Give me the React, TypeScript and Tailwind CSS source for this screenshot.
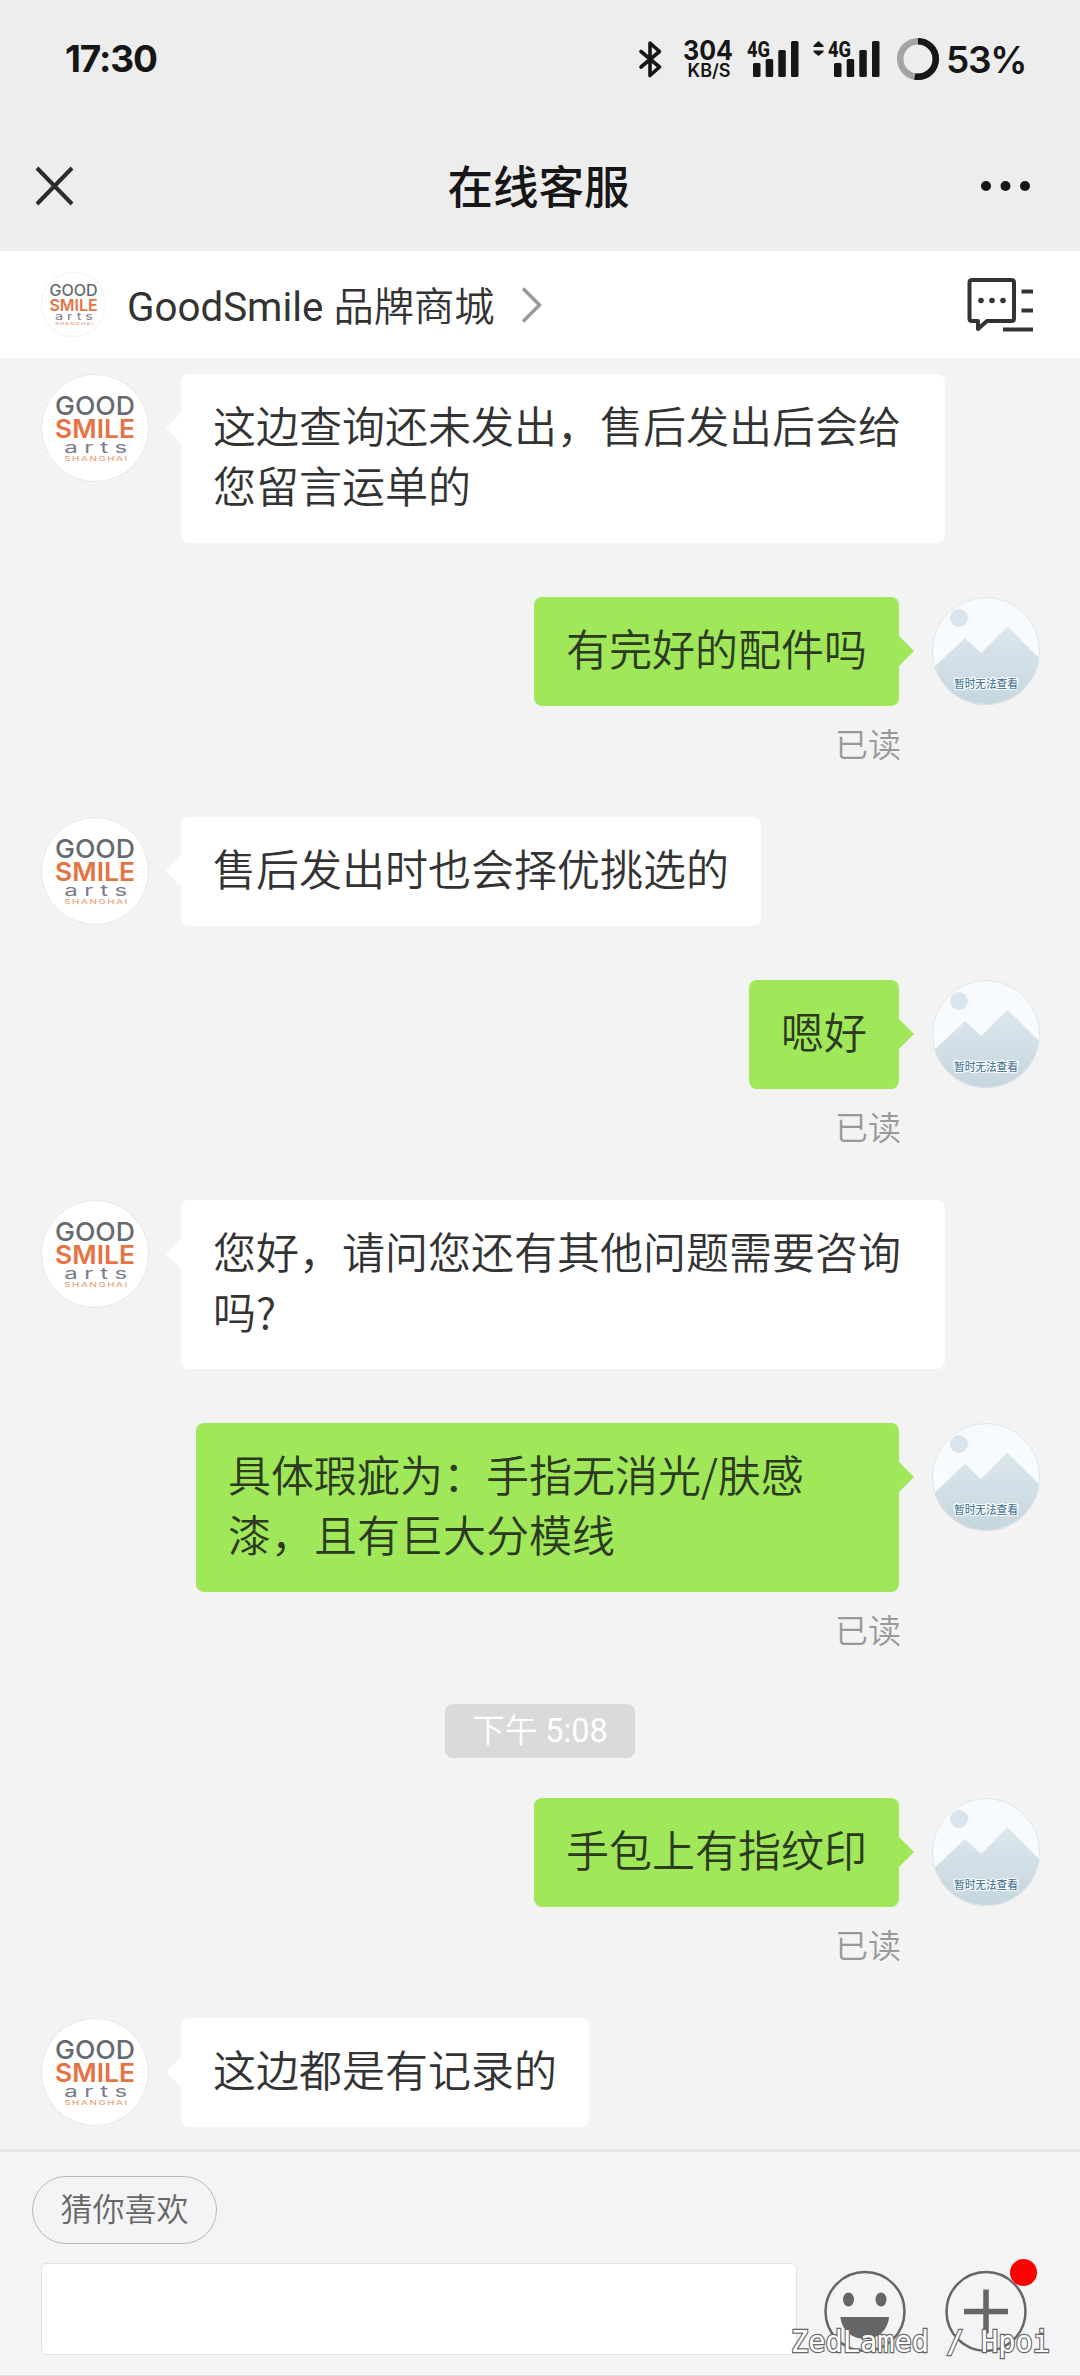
type Message = {
  id: number
  from: 'shop' | 'me'
  text: string
  wide?: boolean
}

const beforeBreak: Message[] = [
  { id: 1, from: 'shop', text: '这边查询还未发出，售后发出后会给您留言运单的', wide: true },
  { id: 2, from: 'me', text: '有完好的配件吗' },
  { id: 3, from: 'shop', text: '售后发出时也会择优挑选的' },
  { id: 4, from: 'me', text: '嗯好' },
  { id: 5, from: 'shop', text: '您好，请问您还有其他问题需要咨询吗?', wide: true },
  { id: 6, from: 'me', text: '具体瑕疵为：手指无消光/肤感漆，且有巨大分模线', wide: true },
]

const afterBreak: Message[] = [
  { id: 7, from: 'me', text: '手包上有指纹印' },
  { id: 8, from: 'shop', text: '这边都是有记录的' },
]

function ShopLogo({ size }: { size: number }) {
  return (
    <svg width={size} height={size} viewBox="0 0 108 108" className="shrink-0 font-[Inter]">
      <circle cx="54" cy="54" r="53.5" fill="#fff" stroke="#e8e8e8" strokeWidth="1" />
      <text x="14" y="40.5" fontSize="26" fontWeight="500" textLength="80" lengthAdjust="spacingAndGlyphs" fill="#666a6e">GOOD</text>
      <text x="14" y="64" fontSize="26" fontWeight="600" textLength="80" lengthAdjust="spacingAndGlyphs" fill="#e57343">SMILE</text>
      <text x="15.5" y="79.5" fontSize="16" textLength="42" transform="scale(1.5 1)" fill="#777b8c">arts</text>
      <text x="15.5" y="87.5" fontSize="6.5" fontWeight="500" textLength="42" transform="scale(1.5 1)" fill="#e9a27f">SHANGHAI</text>
    </svg>
  )
}

function UserAvatar() {
  return (
    <svg width="108" height="108" viewBox="0 0 108 108" className="shrink-0">
      <defs>
        <linearGradient id="sky" x1="0" y1="0" x2="0" y2="1">
          <stop offset="0" stopColor="#f6fafd" />
          <stop offset="1" stopColor="#fbfdfe" />
        </linearGradient>
        <linearGradient id="hill" x1="0" y1="0" x2="0" y2="1">
          <stop offset="0" stopColor="#dde7ed" />
          <stop offset="1" stopColor="#c5d6df" />
        </linearGradient>
        <clipPath id="round"><circle cx="54" cy="54" r="54" /></clipPath>
      </defs>
      <g clipPath="url(#round)">
        <rect width="108" height="108" fill="url(#sky)" />
        <circle cx="27" cy="21" r="9" fill="#dae4ec" />
        <path d="M0 72 L33 41 L49 56 L75.5 29.5 L108 62 V108 H0 Z" fill="url(#hill)" />
      </g>
      <circle cx="54" cy="54" r="53.5" fill="none" stroke="#dfe4e7" strokeWidth="1" />
      <text x="22" y="91" fontSize="10.8" fontWeight="500" textLength="64" fill="#4f7d9c" stroke="#fff" strokeWidth="2" paintOrder="stroke" className="font-['Noto_Sans_CJK_SC',sans-serif]">暂时无法查看</text>
    </svg>
  )
}

function Signal({ active }: { active?: boolean }) {
  return (
    <svg width="68" height="48" viewBox="0 0 68 48" fill="#161616" className="overflow-visible font-[Roboto]">
      {active && <path d="M5.5 5 L10.5 9.5 V11 H0.5 V9.5 Z M0.5 14.5 H10.5 V16 L5.5 20 L0.5 16 Z" />}
      <text x="15" y="20.5" fontSize="22" fontWeight="800" textLength="23" lengthAdjust="spacingAndGlyphs">4G</text>
      <rect x="21" y="27" width="7.5" height="14" rx="1.5" />
      <rect x="33.7" y="23" width="7.5" height="18" rx="1.5" />
      <rect x="46.3" y="14" width="7.5" height="27" rx="1.5" />
      <rect x="59" y="5" width="7.5" height="36" rx="1.5" />
    </svg>
  )
}

function StatusBar() {
  return (
    <div className="flex h-[120px] items-center pr-[55px] pl-[65px] text-[#161616]">
      <span className="mb-[2px] font-[Inter] text-[37px] font-bold tracking-[-1.1px]">17:30</span>
      <div className="ml-auto flex items-center">
        <svg width="26" height="48" viewBox="0 0 26 48" fill="none" stroke="#161616" strokeWidth="3.6" strokeLinejoin="round" strokeLinecap="round">
          <path d="M3 15.5 L21.5 31 L12 39.5 V7 L21.5 15.5 L3 31" />
        </svg>
        <svg width="54" height="48" viewBox="0 0 54 48" fill="#161616" className="ml-[18px] overflow-visible font-[Inter]">
          <text x="1" y="24" fontSize="27" fontWeight="700" textLength="50" lengthAdjust="spacingAndGlyphs">304</text>
          <text x="5.5" y="40.5" fontSize="18" fontWeight="600" textLength="43" lengthAdjust="spacingAndGlyphs">KB/S</text>
        </svg>
        <div className="-ml-[4px]"><Signal /></div>
        <div className="ml-[13px]"><Signal active /></div>
        <svg width="44" height="48" viewBox="0 0 44 48" fill="none" strokeWidth="6.5" className="ml-[15px]">
          <circle cx="22" cy="23" r="17.8" stroke="#a3a3a3" />
          <circle cx="22" cy="23" r="17.8" stroke="#161616" pathLength="100" strokeDasharray="53 47" transform="rotate(-90 22 23)" />
        </svg>
        <span className="ml-[6px] w-[79px] font-[Inter] text-[37px] font-semibold tracking-[-1.3px]">53%</span>
      </div>
    </div>
  )
}

function Bubble({ message }: { message: Message }) {
  const mine = message.from === 'me'
  const width = message.wide ? (mine ? 'w-[703px]' : 'w-[764px]') : ''

  return (
    <div className={`relative rounded-lg px-8 pt-5 pb-[29px] font-['Noto_Sans_CJK_SC',sans-serif] text-[43px] leading-[60px] font-[350] ${mine ? 'bg-[#a0e75a] text-[#2c3a1f]' : 'bg-white text-[#333]'} ${width}`}>
      {message.text}
      {mine ? (
        <svg width="16" height="32" viewBox="0 0 16 32" className="absolute top-[38px] -right-[15px]">
          <path d="M0 0 L16 16 L0 32 Z" fill="#a0e75a" />
        </svg>
      ) : (
        <svg width="16" height="32" viewBox="0 0 16 32" className="absolute top-[38px] -left-[15px]">
          <path d="M16 0 L0 16 L16 32 Z" fill="#fff" />
        </svg>
      )}
    </div>
  )
}

function MessageRow({ message }: { message: Message }) {
  if (message.from === 'shop') {
    return (
      <div className="mb-[54px] flex items-start gap-[32px] pl-[41px]">
        <ShopLogo size={108} />
        <Bubble message={message} />
      </div>
    )
  }

  return (
    <div className="mb-[47px]">
      <div className="flex items-start justify-end gap-[33px] pr-10">
        <Bubble message={message} />
        <UserAvatar />
      </div>
      <p className="mt-[15px] mr-[179px] text-right text-[33px] leading-[49px] font-[350] text-[#999]">已读</p>
    </div>
  )
}

export default function App() {
  return (
    <div className="relative flex h-[2376px] w-[1080px] flex-col overflow-hidden bg-[#f3f3f3] font-[Roboto,'Noto_Sans_CJK_SC',sans-serif]">
      {/* Title bar */}
      <header className="h-[251px] shrink-0 bg-[#ededed]">
        <StatusBar />
        <div className="flex h-[131px] items-center justify-between px-[35px]">
          <svg width="39" height="40" viewBox="0 0 39 40" stroke="#2b2b2b" strokeWidth="4">
            <path d="M2 2 L37 38 M37 2 L2 38" />
          </svg>
          <h1 className="mt-[7px] ml-[22px] text-[45.5px] font-medium text-[#161616]">在线客服</h1>
          <svg width="50" height="12" viewBox="0 0 50 12" fill="#161616" className="mr-[14px]">
            <circle cx="5" cy="6" r="5" />
            <circle cx="24.5" cy="6" r="5" />
            <circle cx="44" cy="6" r="5" />
          </svg>
        </div>
      </header>

      {/* Shop bar */}
      <div className="flex h-[107px] shrink-0 items-center bg-white pr-[47px] pl-[41px]">
        <ShopLogo size={65} />
        <span className="mt-[7px] ml-[21px] text-[40.3px] text-[#333]">
          GoodSmile <span className="font-[350]">品牌商城</span>
        </span>
        <svg width="22" height="36" viewBox="0 0 22 36" fill="none" stroke="#999" strokeWidth="3.5" className="ml-[26px]">
          <path d="M2 1.5 L18.5 18 L2 34.5" />
        </svg>
        <svg width="66" height="56" viewBox="0 0 66 56" fill="none" stroke="#333" strokeWidth="4" className="ml-auto">
          <path d="M5 3 H44.5 Q47 3 47 5.5 V41.5 Q47 44 44.5 44 H20 L11 52 V44 H5 Q2.5 44 2.5 41.5 V5.5 Q2.5 3 5 3 Z" strokeLinejoin="round" />
          <path d="M54.5 14.5 H66 M54.5 33.5 H66 M36 52.5 H66" />
          <g fill="#333" stroke="none">
            <circle cx="14" cy="23.5" r="2.8" />
            <circle cx="25" cy="23.5" r="2.8" />
            <circle cx="36" cy="23.5" r="2.8" />
          </g>
        </svg>
      </div>

      {/* Conversation */}
      <main className="min-h-0 flex-1 pt-4">
        {beforeBreak.map((message) => (
          <MessageRow key={message.id} message={message} />
        ))}
        <div className="mt-[48px] mb-10 flex justify-center">
          <span className="rounded-lg bg-[#dadada] px-[27px] text-[32.5px] leading-[54px] text-white">
            <span className="font-[350]">下午</span> 5:08
          </span>
        </div>
        {afterBreak.map((message) => (
          <MessageRow key={message.id} message={message} />
        ))}
      </main>

      {/* Composer */}
      <footer className="relative h-[227px] shrink-0 border-t-[3px] border-b border-t-[#e4e5e4] border-b-[#e0e0e2] bg-[#f4f4f7] pt-6">
        <button className="ml-8 block h-[68px] w-[185px] rounded-full border border-[#b9b9bb] text-[32px] leading-[66px] font-[350] text-[#666]">猜你喜欢</button>
        <div className="mt-[19px] flex items-start pl-[41px]">
          <div className="h-[92px] w-[756px] rounded-md border border-[#e2e2e4] bg-white" />
          <svg width="82" height="84" viewBox="0 0 82 84" className="mt-[7px] ml-[27px]">
            <circle cx="41" cy="41.5" r="39.5" fill="none" stroke="#666" strokeWidth="2.5" />
            <ellipse cx="24.5" cy="29.5" rx="5.5" ry="7" fill="#666" />
            <ellipse cx="57" cy="29.5" rx="5.5" ry="7" fill="#666" />
            <path d="M16.5 47 H65 C64 60 54 69 41 69 C28 69 17.5 60 16.5 47 Z" fill="#666" />
          </svg>
          <div className="relative mt-[7px] ml-[39px]">
            <svg width="82" height="84" viewBox="0 0 82 84">
              <circle cx="41" cy="41.5" r="39.5" fill="none" stroke="#666" strokeWidth="2.5" />
              <path d="M41 19.5 V63.5 M19 41.5 H63" stroke="#666" strokeWidth="5.5" />
            </svg>
            <span className="absolute -top-[11px] right-[-10px] h-[27px] w-[27px] rounded-full bg-[#ff0000]" />
          </div>
        </div>
      </footer>

      {/* Author watermark */}
      <svg width="270" height="60" viewBox="0 0 270 60" className="absolute right-[26px] bottom-0 overflow-visible">
        <text x="7" y="36" fontSize="30" textLength="259" lengthAdjust="spacingAndGlyphs" fill="#fff" stroke="#666" strokeWidth="2.4" paintOrder="stroke" className="font-['DejaVu_Sans_Mono',monospace]">ZedLamed / Hpoi</text>
      </svg>
    </div>
  )
}
